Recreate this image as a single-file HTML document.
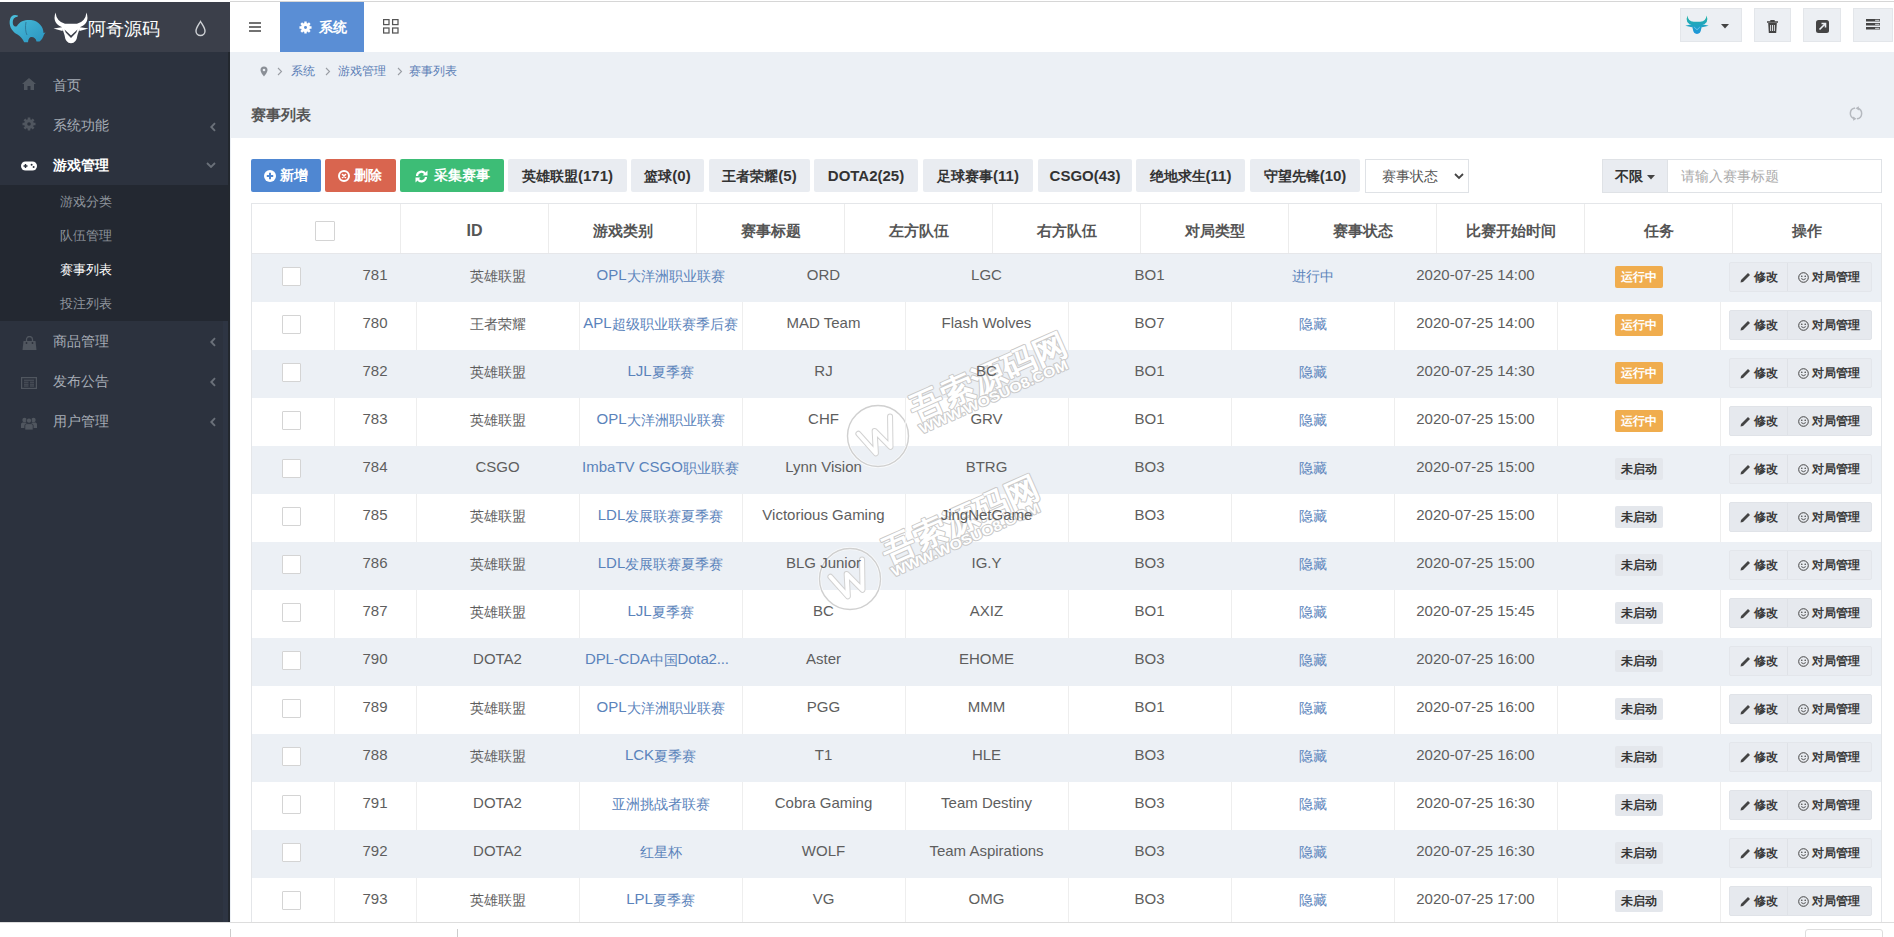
<!DOCTYPE html>
<html><head><meta charset="utf-8">
<style>
*{box-sizing:border-box;margin:0;padding:0}
html,body{width:1894px;height:937px;overflow:hidden;background:#fff;font-family:"Liberation Sans",sans-serif;font-size:14px;color:#555}
.l{font-size:15px}
.th .l{font-size:16px}
.td .l{position:relative;top:-1px}
.abs{position:absolute}
svg{position:absolute;display:block}
#topline{left:230px;top:1px;width:1664px;height:1px;background:#d6d6d6}
#sidebar{left:0;top:2px;width:230px;height:920px;background:#2c323e}
#logo{left:0;top:0;width:230px;height:50px;background:#3b3f4a}
#sub{left:0;top:183px;width:230px;height:136px;background:#232831}
.mi{position:absolute;left:53px;color:#a7adb6;font-size:14px;line-height:20px}
.chev{position:absolute;left:210px}
.si{position:absolute;left:60px;color:#8e949c;font-size:13px;line-height:20px}
#header{left:230px;top:2px;width:1664px;height:50px;background:#fff}
#content{left:230px;top:52px;width:1664px;height:870px;background:#ecf0f5}
#panel{left:231px;top:138px;width:1663px;height:784px;background:#fff}
.hbox{position:absolute;top:6px;height:34px;background:#eceff3;border:1px solid #e3e6ea}
.btn{position:absolute;top:159px;height:33px;line-height:33px;text-align:center;font-weight:bold;font-size:14px;color:#333;background:#e9ecf1;border-radius:2px}
.btn.c{color:#fff}
#tbl{left:251px;top:203px;width:1631px;height:719px;border:1px solid #e4e6e9;border-bottom:none;overflow:hidden}
.th{position:absolute;top:0;height:49px;line-height:54px;text-align:center;font-weight:bold;font-size:15px;color:#555}
.row{position:absolute;left:0;width:1629px;height:48px}
.rowbg{position:absolute;left:0;width:1629px;height:48px;background:#ecf0f5}
.td{position:absolute;top:0;height:48px;line-height:44px;text-align:center;font-size:14px;color:#5e5e5e;white-space:nowrap;overflow:hidden}
.row.even .td{box-shadow:inset 1px 0 #eeeeee}
.row.even .td.c0{box-shadow:none}
.lnk{color:#5a83bb}
.cb{position:absolute;width:19px;height:19px;border:1px solid #d4d4d4;background:#fff;border-radius:1px}
.badge{position:absolute;top:12px;width:48px;height:22px;line-height:22px;font-size:12px;font-weight:bold;text-align:center;border-radius:2px}
.b-run{background:#f0ad4e;color:#fff}
.b-stop{background:#e4e7ec;color:#333}
.ops{position:absolute;left:9px;top:8px;width:143px;height:30px;background:#e6e9ee;border:1px solid #e0e3e8;border-radius:2px;font-size:12px;font-weight:bold;color:#3a3a3a;line-height:29px}
.row.odd .ops{background:#e9ecf1;border-color:#e3e6eb}
.op1{position:absolute;left:0;top:0;width:58px;height:28px;border-right:1px solid #dfe2e7}
.op2{position:absolute;left:58px;top:0;width:84px;height:28px}
.ops svg{top:9px}
.ops .t1{position:absolute;left:24px;top:0}
.ops .t2{position:absolute;left:24px;top:0}
</style></head><body>
<div id="topline" class="abs"></div>
<div id="sidebar" class="abs">
  <div id="logo" class="abs">
    <svg style="left:0;top:0" width="100" height="50" viewBox="0 2 100 50">
      <defs><linearGradient id="eg" x1="0" y1="0" x2="1" y2="1"><stop offset="0" stop-color="#4cc0dc"/><stop offset="1" stop-color="#2a94c0"/></linearGradient></defs>
      <path d="M13 31 C9 27 8.5 19 12 16 C13.5 14.8 15.5 14.6 18 15.6 L17.3 17 C14.5 16.8 12.6 19 12.8 23 C13 26 15 27.5 17 26 C20 20.5 26 19.5 31 20 C39 21 43.5 27 43.5 33 L45.5 32.5 L44 34.5 C43 38 41.5 40 39.5 41.5 L36.5 41.5 C36 38.5 34 37 31.5 37 C29.5 37 28.3 39 28 42.3 L24.2 42.3 C22.5 38.5 20.5 36.5 17.5 34.5 C15.5 33.5 14 32.5 13 31 Z" fill="url(#eg)"/>
      <path d="M26 22 C25 27 25.5 32 27 35" fill="none" stroke="#2b6f8f" stroke-width="0.8"/>
      <path d="M55.5 12.5 Q51.5 24.5 64 27.6 L78 27.6 Q90.5 24.5 86.5 12.5 Q85.5 21.5 77 23.8 L65 23.8 Q56.5 21.5 55.5 12.5 Z" fill="#fff"/>
      <path d="M53.5 28.5 L63.5 27 L62.5 31 Z M88.5 28.5 L78.5 27 L79.5 31 Z" fill="#fff"/>
      <path d="M61.5 26 L80.5 26 L77.5 35 Q76.5 43.2 71 43.2 Q65.5 43.2 64.5 35 Z" fill="#fff"/>
      <path d="M64.5 29.5 L71 35.5 L77.5 29.5 L76.3 32.5 L71 38 L65.7 32.5 Z" fill="#3b3f4a"/>
    </svg>
    <div class="abs" style="left:88px;top:15px;font-family:'Liberation Serif',serif;font-size:18px;line-height:24px;color:#fff">阿奇源码</div>
    <svg style="left:194px;top:18px" width="13" height="17" viewBox="0 0 13 17">
      <path d="M6.5 1.5 C4.5 5 2 8 2 11 A4.5 4.5 0 0 0 11 11 C11 8 8.5 5 6.5 1.5 Z" fill="none" stroke="#cfd2d6" stroke-width="1.4"/>
    </svg>
  </div>
  <div id="sub" class="abs"></div>
  <div class="abs" style="left:223px;top:319px;width:5px;height:601px;background:#2e3543"></div>
  <div class="abs" style="left:228px;top:50px;width:2px;height:870px;background:#23282f"></div>
  <!-- icons -->
  <svg style="left:22px;top:76px" width="14" height="12" viewBox="0 0 14 12"><path d="M7 0 L14 6 L12 6 L12 12 L8.5 12 L8.5 8 L5.5 8 L5.5 12 L2 12 L2 6 L0 6 Z" fill="#50565f"/></svg>
  <svg style="left:22px;top:115px" width="14" height="14" viewBox="0 0 14 14"><circle cx="7" cy="7" r="4.8" fill="#50565f"/><g stroke="#50565f" stroke-width="2.6"><path d="M7 0.5V13.5M0.5 7H13.5M2.4 2.4L11.6 11.6M11.6 2.4L2.4 11.6"/></g><circle cx="7" cy="7" r="1.8" fill="#2b313c"/></svg>
  <svg style="left:21px;top:159px" width="16" height="10" viewBox="0 0 16 10"><rect x="0" y="0.5" width="16" height="9" rx="4.5" fill="#fff"/><path d="M2.5 5H6.5M4.5 3V7" stroke="#2b313c" stroke-width="1.4"/><circle cx="10.6" cy="3.8" r="1" fill="#2b313c"/><circle cx="12.6" cy="6" r="1" fill="#2b313c"/></svg>
  <svg style="left:22px;top:334px" width="15" height="14" viewBox="0 0 15 14"><path d="M1.5 5H13.5L14.5 14H0.5Z" fill="#50565f"/><path d="M4.5 6V3.5A3 3 0 0 1 10.5 3.5V6" fill="none" stroke="#50565f" stroke-width="1.3"/><circle cx="4.5" cy="7" r="0.9" fill="#2b313c"/><circle cx="10.5" cy="7" r="0.9" fill="#2b313c"/></svg>
  <svg style="left:21px;top:375px" width="16" height="12" viewBox="0 0 16 12"><rect x="0.6" y="0.6" width="14.8" height="10.8" fill="none" stroke="#50565f" stroke-width="1.2"/><path d="M3 3.2H13M3 5.2H7.5M3 7.2H7.5M3 9H7.5M9 5.2H13M9 7.2H13M9 9H13" stroke="#50565f" stroke-width="1"/></svg>
  <svg style="left:21px;top:415px" width="16" height="13" viewBox="0 0 16 13"><circle cx="3.5" cy="3" r="2.2" fill="#50565f"/><circle cx="12.5" cy="3" r="2.2" fill="#50565f"/><path d="M0 11V7.5C0 6 1 5.5 2.5 5.5H4.5C6 5.5 6 6.5 6 7.5V11Z M10 11V7.5C10 6.5 10 5.5 11.5 5.5H13.5C15 5.5 16 6 16 7.5V11Z" fill="#50565f"/><circle cx="8" cy="3.6" r="2.6" fill="#50565f" stroke="#2b313c" stroke-width="0.8"/><path d="M3.8 13V9C3.8 7.3 5 6.6 6.5 6.6H9.5C11 6.6 12.2 7.3 12.2 9V13Z" fill="#50565f" stroke="#2b313c" stroke-width="0.8"/></svg>
  <div class="mi" style="top:73px">首页</div>
  <div class="mi" style="top:113px">系统功能</div>
  <div class="mi" style="top:153px;color:#fff;font-weight:bold">游戏管理</div>
  <div class="si" style="top:190px">游戏分类</div>
  <div class="si" style="top:224px">队伍管理</div>
  <div class="si" style="top:258px;color:#fff">赛事列表</div>
  <div class="si" style="top:292px">投注列表</div>
  <div class="mi" style="top:329px">商品管理</div>
  <div class="mi" style="top:369px">发布公告</div>
  <div class="mi" style="top:409px">用户管理</div>
  <svg class="chev" style="top:120px" width="6" height="10" viewBox="0 0 6 10"><path d="M5 1.2L1.3 5L5 8.8" fill="none" stroke="#6a7079" stroke-width="1.9"/></svg>
  <svg class="chev" style="left:206px;top:160px" width="10" height="6" viewBox="0 0 10 6"><path d="M1 1L5 5L9 1" fill="none" stroke="#6a7079" stroke-width="1.8"/></svg>
  <svg class="chev" style="top:335px" width="6" height="10" viewBox="0 0 6 10"><path d="M5 1.2L1.3 5L5 8.8" fill="none" stroke="#6a7079" stroke-width="1.9"/></svg>
  <svg class="chev" style="top:375px" width="6" height="10" viewBox="0 0 6 10"><path d="M5 1.2L1.3 5L5 8.8" fill="none" stroke="#6a7079" stroke-width="1.9"/></svg>
  <svg class="chev" style="top:415px" width="6" height="10" viewBox="0 0 6 10"><path d="M5 1.2L1.3 5L5 8.8" fill="none" stroke="#6a7079" stroke-width="1.9"/></svg>
</div>
<div id="header" class="abs">
  <svg style="left:19px;top:20px" width="12" height="10" viewBox="0 0 12 10"><path d="M0 1H12M0 5H12M0 9H12" stroke="#444" stroke-width="1.6"/></svg>
  <div class="abs" style="left:50px;top:0;width:84px;height:50px;background:#5a8ed5"></div>
  <svg style="left:69px;top:18.5px" width="13" height="13" viewBox="0 0 14 14"><circle cx="7" cy="7" r="4.8" fill="#fff"/><g stroke="#fff" stroke-width="2.6"><path d="M7 0.5V13.5M0.5 7H13.5M2.4 2.4L11.6 11.6M11.6 2.4L2.4 11.6"/></g><circle cx="7" cy="7" r="1.6" fill="#5a8ed5"/></svg>
  <div class="abs" style="left:89px;top:15px;font-size:14px;line-height:20px;color:#fff;font-weight:bold">系统</div>
  <svg style="left:153px;top:17px" width="16" height="15" viewBox="0 0 16 15"><g fill="none" stroke="#555" stroke-width="1.25"><rect x="0.6" y="0.6" width="5.4" height="5" /><rect x="9.6" y="0.6" width="5.4" height="5"/><rect x="0.6" y="9" width="5.4" height="5"/><rect x="9.6" y="9" width="5.4" height="5"/></g></svg>
  <div class="hbox" style="left:1450px;width:62px"></div>
  <svg style="left:0;top:0" width="1664" height="50" viewBox="0 0 1664 50"><defs><linearGradient id="bg2" gradientUnits="userSpaceOnUse" x1="0" y1="14" x2="0" y2="43"><stop offset="0" stop-color="#22b3a6"/><stop offset="1" stop-color="#1d95dc"/></linearGradient></defs><g transform="translate(1424.4,6) scale(0.6)" fill="url(#bg2)"><path d="M55 12.5 Q50 26 64 28.5 L78 28.5 Q92 26 87 12.5 Q86 22 76.5 23 L65.5 23 Q56 22 55 12.5 Z"/><path d="M51.5 29.5 L63.5 26.5 L62.5 32 Z"/><path d="M90.5 29.5 L78.5 26.5 L79.5 32 Z"/><path d="M61 25 L81 25 L78 35 Q77 43.2 71 43.2 Q65 43.2 64 35 Z"/><path d="M65.5 30.5 L71 35.5 L76.5 30.5 L75.5 33 L71 37 L66.5 33 Z" fill="#6cc6ee"/></g></svg>
  <svg style="left:1491px;top:22px" width="8" height="5" viewBox="0 0 8 5"><path d="M0 0H8L4 4.5Z" fill="#444"/></svg>
  <div class="hbox" style="left:1524px;width:37px"></div>
  <svg style="left:1537px;top:18px" width="11" height="13" viewBox="0 0 11 13"><path d="M0 2H11M4 2V0.7H7V2" fill="none" stroke="#444" stroke-width="1.4"/><path d="M1.2 3H9.8L9.2 13H1.8Z" fill="#444"/><path d="M3.6 5V11M5.5 5V11M7.4 5V11" stroke="#eceff3" stroke-width="0.9"/></svg>
  <div class="hbox" style="left:1573px;width:38px"></div>
  <svg style="left:1586px;top:18px" width="13" height="13" viewBox="0 0 13 13"><rect x="0" y="0" width="13" height="13" rx="2.5" fill="#444"/><path d="M3.5 9.5L9 4M5.5 3.5H9.5V7.5" fill="none" stroke="#eceff3" stroke-width="1.6"/></svg>
  <div class="hbox" style="left:1623px;width:40px"></div>
  <svg style="left:1636px;top:16.5px" width="15" height="12" viewBox="0 0 15 12"><path d="M0 1.3H14M0 5.3H14M0 9.3H14" stroke="#444" stroke-width="2.6"/><path d="M9.5 1.3H13M9.5 5.3H13M9.5 9.3H13" stroke="#eceff3" stroke-width="0.9" stroke-linecap="round"/></svg>
</div>
<div id="content" class="abs">
  <svg style="left:30px;top:14px" width="8" height="11" viewBox="0 0 8 11"><path d="M4 0.5A3.5 3.5 0 0 0 0.5 4C0.5 6.5 4 10.5 4 10.5C4 10.5 7.5 6.5 7.5 4A3.5 3.5 0 0 0 4 0.5Z" fill="#8a8f96"/><circle cx="4" cy="4" r="1.3" fill="#ecf0f5"/></svg>
  <svg style="left:47px;top:15px" width="6" height="9" viewBox="0 0 6 9"><path d="M1 1L4.5 4.5L1 8" fill="none" stroke="#9a9ea4" stroke-width="1.1"/></svg>
  <div class="abs" style="left:61px;top:10px;font-size:12px;line-height:18px;color:#5b7eb5">系统</div>
  <svg style="left:95px;top:15px" width="6" height="9" viewBox="0 0 6 9"><path d="M1 1L4.5 4.5L1 8" fill="none" stroke="#9a9ea4" stroke-width="1.1"/></svg>
  <div class="abs" style="left:108px;top:10px;font-size:12px;line-height:18px;color:#5b7eb5">游戏管理</div>
  <svg style="left:167px;top:15px" width="6" height="9" viewBox="0 0 6 9"><path d="M1 1L4.5 4.5L1 8" fill="none" stroke="#9a9ea4" stroke-width="1.1"/></svg>
  <div class="abs" style="left:179px;top:10px;font-size:12px;line-height:18px;color:#5b7eb5">赛事列表</div>
  <div class="abs" style="left:21px;top:53px;font-size:15px;line-height:20px;font-weight:bold;color:#555">赛事列表</div>
  <svg style="left:1619px;top:54px" width="14" height="15" viewBox="0 0 14 15"><g fill="none" stroke="#b5b9bf" stroke-width="1.5"><path d="M6 2 A5.4 5.4 0 0 0 5.5 12.6"/><path d="M8 12.8 A5.4 5.4 0 0 0 8.5 2.2"/></g><path d="M4 10.5 L7.5 12.8 L4.2 14.8 Z" fill="#b5b9bf"/><path d="M10 4.5 L6.5 2.2 L9.8 0.2 Z" fill="#b5b9bf"/></svg>
</div>
<div id="panel" class="abs"></div>
<div class="btn c" style="left:251px;width:70px;background:#4f87d2"><svg style="left:13px;top:11px" width="12" height="12" viewBox="0 0 12 12"><circle cx="6" cy="6" r="6" fill="#fff"/><path d="M6 2.8V9.2M2.8 6H9.2" stroke="#4f87d2" stroke-width="2"/></svg><span style="position:absolute;left:29px">新增</span></div>
<div class="btn c" style="left:325px;width:71px;background:#d9654f"><svg style="left:13px;top:11px" width="12" height="12" viewBox="0 0 12 12"><circle cx="6" cy="6" r="5" fill="none" stroke="#fff" stroke-width="2"/><path d="M4.5 4.5L7.5 7.5M7.5 4.5L4.5 7.5" stroke="#fff" stroke-width="1.6" stroke-linecap="round"/></svg><span style="position:absolute;left:29px">删除</span></div>
<div class="btn c" style="left:400px;width:104px;background:#3dbd76"><svg style="left:15px;top:10.5px" width="13" height="13" viewBox="0 0 13 13"><path d="M2 6A4.5 4.5 0 0 1 10.3 3.8M11 7A4.5 4.5 0 0 1 2.7 9.2" fill="none" stroke="#fff" stroke-width="2.2"/><path d="M12.5 0.5V5.5H7.5Z M0.5 12.5V7.5H5.5Z" fill="#fff"/></svg><span style="position:absolute;left:34px">采集赛事</span></div>
<div class="btn" style="left:508px;width:119px">英雄联盟<span class="l">(171)</span></div>
<div class="btn" style="left:631px;width:73px">篮球<span class="l">(0)</span></div>
<div class="btn" style="left:709px;width:101px">王者荣耀<span class="l">(5)</span></div>
<div class="btn" style="left:814px;width:104px"><span class="l">DOTA2(25)</span></div>
<div class="btn" style="left:923px;width:110px">足球赛事<span class="l">(11)</span></div>
<div class="btn" style="left:1038px;width:94px"><span class="l">CSGO(43)</span></div>
<div class="btn" style="left:1136px;width:109px">绝地求生<span class="l">(11)</span></div>
<div class="btn" style="left:1250px;width:110px">守望先锋<span class="l">(10)</span></div>
<div class="abs" style="left:1365px;top:159px;width:104px;height:34px;border:1px solid #dfe2e6;background:#fff"><span style="position:absolute;left:16px;top:7px;font-size:14px;line-height:18px;color:#555">赛事状态</span><svg style="left:88px;top:13px" width="10" height="7" viewBox="0 0 10 7"><path d="M1 1L5 5L9 1" fill="none" stroke="#444" stroke-width="1.8"/></svg></div>
<div class="abs" style="left:1602px;top:159px;width:66px;height:34px;border:1px solid #dfe2e6;background:#e9ecf1"><span style="position:absolute;left:12px;top:7px;font-size:14px;line-height:18px;font-weight:bold;color:#333">不限</span><svg style="left:44px;top:15px" width="8" height="5" viewBox="0 0 8 5"><path d="M0 0H8L4 4.5Z" fill="#444"/></svg></div>
<div class="abs" style="left:1667px;top:159px;width:215px;height:34px;border:1px solid #dfe2e6;background:#fff"><span style="position:absolute;left:13px;top:7px;font-size:14px;line-height:18px;color:#aaa">请输入赛事标题</span></div>
<div id="tbl" class="abs">
<div class="th" style="left:-1.0px;width:149.0px;"><span class="cb" style="left:64px;top:17px;width:20px;height:20px"></span></div>
<div class="th" style="left:148.0px;width:148.0px;border-left:1px solid #ececec;"><span class="l">ID</span></div>
<div class="th" style="left:296.0px;width:148.0px;border-left:1px solid #ececec;">游戏类别</div>
<div class="th" style="left:444.0px;width:148.0px;border-left:1px solid #ececec;">赛事标题</div>
<div class="th" style="left:592.0px;width:148.0px;border-left:1px solid #ececec;">左方队伍</div>
<div class="th" style="left:740.0px;width:148.0px;border-left:1px solid #ececec;">右方队伍</div>
<div class="th" style="left:888.0px;width:148.0px;border-left:1px solid #ececec;">对局类型</div>
<div class="th" style="left:1036.0px;width:148.0px;border-left:1px solid #ececec;">赛事状态</div>
<div class="th" style="left:1184.0px;width:148.0px;border-left:1px solid #ececec;">比赛开始时间</div>
<div class="th" style="left:1332.0px;width:148.0px;border-left:1px solid #ececec;">任务</div>
<div class="th" style="left:1480.0px;width:149.0px;border-left:1px solid #ececec;">操作</div>
<div class="rowbg" style="top:50px"></div>
<div class="rowbg" style="top:146px"></div>
<div class="rowbg" style="top:242px"></div>
<div class="rowbg" style="top:338px"></div>
<div class="rowbg" style="top:434px"></div>
<div class="rowbg" style="top:530px"></div>
<div class="rowbg" style="top:626px"></div>
<div style="position:absolute;left:0;top:49px;width:1629px;height:1px;background:#e6e7ea"></div>
<svg style="left:-252px;top:-204px" width="1894" height="937" viewBox="0 0 1894 937">
<g transform="translate(878,436)">
<circle cx="0" cy="0" r="30.5" fill="none" stroke="#fff" stroke-width="3" opacity=".7"/>
<circle cx="0" cy="0" r="30.5" fill="none" stroke="#d0d0d0" stroke-width="1.4"/>
<g transform="rotate(-24)">
<path d="M-17 -10 L-9 15 L-1 -6 L7 15 L19 -13" fill="none" stroke="#d2d2d2" stroke-width="6" stroke-linejoin="round" stroke-linecap="round"/>
<path d="M-17 -10 L-9 15 L-1 -6 L7 15 L19 -13" fill="none" stroke="#fff" stroke-width="4" stroke-linejoin="round" stroke-linecap="round"/>
<text x="41" y="2" textLength="168" lengthAdjust="spacingAndGlyphs" font-size="32" font-weight="bold" fill="#fff" stroke="#cacaca" stroke-width="2" paint-order="stroke" stroke-linejoin="round" font-family="Liberation Sans,sans-serif">吾索源码网</text>
<text x="41" y="16" textLength="161" lengthAdjust="spacingAndGlyphs" font-size="14" font-weight="bold" fill="#fff" stroke="#cacaca" stroke-width="2" paint-order="stroke" stroke-linejoin="round" font-family="Liberation Sans,sans-serif">WWW.WOSUO8.COM</text>
</g></g>
<g transform="translate(850,579)">
<circle cx="0" cy="0" r="30.5" fill="none" stroke="#fff" stroke-width="3" opacity=".7"/>
<circle cx="0" cy="0" r="30.5" fill="none" stroke="#d0d0d0" stroke-width="1.4"/>
<g transform="rotate(-24)">
<path d="M-17 -10 L-9 15 L-1 -6 L7 15 L19 -13" fill="none" stroke="#d2d2d2" stroke-width="6" stroke-linejoin="round" stroke-linecap="round"/>
<path d="M-17 -10 L-9 15 L-1 -6 L7 15 L19 -13" fill="none" stroke="#fff" stroke-width="4" stroke-linejoin="round" stroke-linecap="round"/>
<text x="41" y="2" textLength="168" lengthAdjust="spacingAndGlyphs" font-size="32" font-weight="bold" fill="#fff" stroke="#cacaca" stroke-width="2" paint-order="stroke" stroke-linejoin="round" font-family="Liberation Sans,sans-serif">吾索源码网</text>
<text x="41" y="16" textLength="161" lengthAdjust="spacingAndGlyphs" font-size="14" font-weight="bold" fill="#fff" stroke="#cacaca" stroke-width="2" paint-order="stroke" stroke-linejoin="round" font-family="Liberation Sans,sans-serif">WWW.WOSUO8.COM</text>
</g></g>
</svg>

<div class="row odd" style="top:50px"><div class="td c0" style="left:-1.0px;width:83.0px;"><span class="cb" style="left:31.0px;top:13px"></span></div><div class="td c1" style="left:82.0px;width:82.0px;"><span class="l">781</span></div><div class="td c2" style="left:164.0px;width:163.0px;">英雄联盟</div><div class="td c3" style="left:327.0px;width:163.0px;"><span class="lnk"><span class="l">OPL</span>大洋洲职业联赛</span></div><div class="td c4" style="left:490.0px;width:163.0px;"><span class="l">ORD</span></div><div class="td c5" style="left:653.0px;width:163.0px;"><span class="l">LGC</span></div><div class="td c6" style="left:816.0px;width:163.0px;"><span class="l">BO1</span></div><div class="td c7" style="left:979.0px;width:163.0px;"><span class="lnk">进行中</span></div><div class="td c8" style="left:1142.0px;width:163.0px;"><span class="l">2020-07-25 14:00</span></div><div class="td c9" style="left:1305.0px;width:163.0px;"><span class="badge b-run" style="left:58.0px">运行中</span></div><div class="td c10" style="left:1468.0px;width:161.0px;"><span class="ops"><span class="op1"><svg style="left:10px" width="11" height="11" viewBox="0 0 11 11"><path d="M0.5 10.5L1 8L8 1L10 3L3 10Z" fill="#444"/></svg><span class="t1">修改</span></span><span class="op2"><svg style="left:10px" width="11" height="11" viewBox="0 0 11 11"><circle cx="5.5" cy="5.5" r="4.8" fill="none" stroke="#444" stroke-width="1"/><circle cx="3.8" cy="4.2" r="0.8" fill="#444"/><circle cx="7.2" cy="4.2" r="0.8" fill="#444"/><path d="M3.2 6.6Q5.5 8.8 7.8 6.6" fill="none" stroke="#444" stroke-width="0.9"/></svg><span class="t2">对局管理</span></span></span></div></div>
<div class="row even" style="top:98px"><div class="td c0" style="left:-1.0px;width:83.0px;"><span class="cb" style="left:31.0px;top:13px"></span></div><div class="td c1" style="left:82.0px;width:82.0px;"><span class="l">780</span></div><div class="td c2" style="left:164.0px;width:163.0px;">王者荣耀</div><div class="td c3" style="left:327.0px;width:163.0px;"><span class="lnk"><span class="l">APL</span>超级职业联赛季后赛</span></div><div class="td c4" style="left:490.0px;width:163.0px;"><span class="l">MAD Team</span></div><div class="td c5" style="left:653.0px;width:163.0px;"><span class="l">Flash Wolves</span></div><div class="td c6" style="left:816.0px;width:163.0px;"><span class="l">BO7</span></div><div class="td c7" style="left:979.0px;width:163.0px;"><span class="lnk">隐藏</span></div><div class="td c8" style="left:1142.0px;width:163.0px;"><span class="l">2020-07-25 14:00</span></div><div class="td c9" style="left:1305.0px;width:163.0px;"><span class="badge b-run" style="left:58.0px">运行中</span></div><div class="td c10" style="left:1468.0px;width:161.0px;"><span class="ops"><span class="op1"><svg style="left:10px" width="11" height="11" viewBox="0 0 11 11"><path d="M0.5 10.5L1 8L8 1L10 3L3 10Z" fill="#444"/></svg><span class="t1">修改</span></span><span class="op2"><svg style="left:10px" width="11" height="11" viewBox="0 0 11 11"><circle cx="5.5" cy="5.5" r="4.8" fill="none" stroke="#444" stroke-width="1"/><circle cx="3.8" cy="4.2" r="0.8" fill="#444"/><circle cx="7.2" cy="4.2" r="0.8" fill="#444"/><path d="M3.2 6.6Q5.5 8.8 7.8 6.6" fill="none" stroke="#444" stroke-width="0.9"/></svg><span class="t2">对局管理</span></span></span></div></div>
<div class="row odd" style="top:146px"><div class="td c0" style="left:-1.0px;width:83.0px;"><span class="cb" style="left:31.0px;top:13px"></span></div><div class="td c1" style="left:82.0px;width:82.0px;"><span class="l">782</span></div><div class="td c2" style="left:164.0px;width:163.0px;">英雄联盟</div><div class="td c3" style="left:327.0px;width:163.0px;"><span class="lnk"><span class="l">LJL</span>夏季赛</span></div><div class="td c4" style="left:490.0px;width:163.0px;"><span class="l">RJ</span></div><div class="td c5" style="left:653.0px;width:163.0px;"><span class="l">BC</span></div><div class="td c6" style="left:816.0px;width:163.0px;"><span class="l">BO1</span></div><div class="td c7" style="left:979.0px;width:163.0px;"><span class="lnk">隐藏</span></div><div class="td c8" style="left:1142.0px;width:163.0px;"><span class="l">2020-07-25 14:30</span></div><div class="td c9" style="left:1305.0px;width:163.0px;"><span class="badge b-run" style="left:58.0px">运行中</span></div><div class="td c10" style="left:1468.0px;width:161.0px;"><span class="ops"><span class="op1"><svg style="left:10px" width="11" height="11" viewBox="0 0 11 11"><path d="M0.5 10.5L1 8L8 1L10 3L3 10Z" fill="#444"/></svg><span class="t1">修改</span></span><span class="op2"><svg style="left:10px" width="11" height="11" viewBox="0 0 11 11"><circle cx="5.5" cy="5.5" r="4.8" fill="none" stroke="#444" stroke-width="1"/><circle cx="3.8" cy="4.2" r="0.8" fill="#444"/><circle cx="7.2" cy="4.2" r="0.8" fill="#444"/><path d="M3.2 6.6Q5.5 8.8 7.8 6.6" fill="none" stroke="#444" stroke-width="0.9"/></svg><span class="t2">对局管理</span></span></span></div></div>
<div class="row even" style="top:194px"><div class="td c0" style="left:-1.0px;width:83.0px;"><span class="cb" style="left:31.0px;top:13px"></span></div><div class="td c1" style="left:82.0px;width:82.0px;"><span class="l">783</span></div><div class="td c2" style="left:164.0px;width:163.0px;">英雄联盟</div><div class="td c3" style="left:327.0px;width:163.0px;"><span class="lnk"><span class="l">OPL</span>大洋洲职业联赛</span></div><div class="td c4" style="left:490.0px;width:163.0px;"><span class="l">CHF</span></div><div class="td c5" style="left:653.0px;width:163.0px;"><span class="l">GRV</span></div><div class="td c6" style="left:816.0px;width:163.0px;"><span class="l">BO1</span></div><div class="td c7" style="left:979.0px;width:163.0px;"><span class="lnk">隐藏</span></div><div class="td c8" style="left:1142.0px;width:163.0px;"><span class="l">2020-07-25 15:00</span></div><div class="td c9" style="left:1305.0px;width:163.0px;"><span class="badge b-run" style="left:58.0px">运行中</span></div><div class="td c10" style="left:1468.0px;width:161.0px;"><span class="ops"><span class="op1"><svg style="left:10px" width="11" height="11" viewBox="0 0 11 11"><path d="M0.5 10.5L1 8L8 1L10 3L3 10Z" fill="#444"/></svg><span class="t1">修改</span></span><span class="op2"><svg style="left:10px" width="11" height="11" viewBox="0 0 11 11"><circle cx="5.5" cy="5.5" r="4.8" fill="none" stroke="#444" stroke-width="1"/><circle cx="3.8" cy="4.2" r="0.8" fill="#444"/><circle cx="7.2" cy="4.2" r="0.8" fill="#444"/><path d="M3.2 6.6Q5.5 8.8 7.8 6.6" fill="none" stroke="#444" stroke-width="0.9"/></svg><span class="t2">对局管理</span></span></span></div></div>
<div class="row odd" style="top:242px"><div class="td c0" style="left:-1.0px;width:83.0px;"><span class="cb" style="left:31.0px;top:13px"></span></div><div class="td c1" style="left:82.0px;width:82.0px;"><span class="l">784</span></div><div class="td c2" style="left:164.0px;width:163.0px;"><span class="l">CSGO</span></div><div class="td c3" style="left:327.0px;width:163.0px;"><span class="lnk"><span class="l">ImbaTV CSGO</span>职业联赛</span></div><div class="td c4" style="left:490.0px;width:163.0px;"><span class="l">Lynn Vision</span></div><div class="td c5" style="left:653.0px;width:163.0px;"><span class="l">BTRG</span></div><div class="td c6" style="left:816.0px;width:163.0px;"><span class="l">BO3</span></div><div class="td c7" style="left:979.0px;width:163.0px;"><span class="lnk">隐藏</span></div><div class="td c8" style="left:1142.0px;width:163.0px;"><span class="l">2020-07-25 15:00</span></div><div class="td c9" style="left:1305.0px;width:163.0px;"><span class="badge b-stop" style="left:58.0px">未启动</span></div><div class="td c10" style="left:1468.0px;width:161.0px;"><span class="ops"><span class="op1"><svg style="left:10px" width="11" height="11" viewBox="0 0 11 11"><path d="M0.5 10.5L1 8L8 1L10 3L3 10Z" fill="#444"/></svg><span class="t1">修改</span></span><span class="op2"><svg style="left:10px" width="11" height="11" viewBox="0 0 11 11"><circle cx="5.5" cy="5.5" r="4.8" fill="none" stroke="#444" stroke-width="1"/><circle cx="3.8" cy="4.2" r="0.8" fill="#444"/><circle cx="7.2" cy="4.2" r="0.8" fill="#444"/><path d="M3.2 6.6Q5.5 8.8 7.8 6.6" fill="none" stroke="#444" stroke-width="0.9"/></svg><span class="t2">对局管理</span></span></span></div></div>
<div class="row even" style="top:290px"><div class="td c0" style="left:-1.0px;width:83.0px;"><span class="cb" style="left:31.0px;top:13px"></span></div><div class="td c1" style="left:82.0px;width:82.0px;"><span class="l">785</span></div><div class="td c2" style="left:164.0px;width:163.0px;">英雄联盟</div><div class="td c3" style="left:327.0px;width:163.0px;"><span class="lnk"><span class="l">LDL</span>发展联赛夏季赛</span></div><div class="td c4" style="left:490.0px;width:163.0px;"><span class="l">Victorious Gaming</span></div><div class="td c5" style="left:653.0px;width:163.0px;"><span class="l">JingNetGame</span></div><div class="td c6" style="left:816.0px;width:163.0px;"><span class="l">BO3</span></div><div class="td c7" style="left:979.0px;width:163.0px;"><span class="lnk">隐藏</span></div><div class="td c8" style="left:1142.0px;width:163.0px;"><span class="l">2020-07-25 15:00</span></div><div class="td c9" style="left:1305.0px;width:163.0px;"><span class="badge b-stop" style="left:58.0px">未启动</span></div><div class="td c10" style="left:1468.0px;width:161.0px;"><span class="ops"><span class="op1"><svg style="left:10px" width="11" height="11" viewBox="0 0 11 11"><path d="M0.5 10.5L1 8L8 1L10 3L3 10Z" fill="#444"/></svg><span class="t1">修改</span></span><span class="op2"><svg style="left:10px" width="11" height="11" viewBox="0 0 11 11"><circle cx="5.5" cy="5.5" r="4.8" fill="none" stroke="#444" stroke-width="1"/><circle cx="3.8" cy="4.2" r="0.8" fill="#444"/><circle cx="7.2" cy="4.2" r="0.8" fill="#444"/><path d="M3.2 6.6Q5.5 8.8 7.8 6.6" fill="none" stroke="#444" stroke-width="0.9"/></svg><span class="t2">对局管理</span></span></span></div></div>
<div class="row odd" style="top:338px"><div class="td c0" style="left:-1.0px;width:83.0px;"><span class="cb" style="left:31.0px;top:13px"></span></div><div class="td c1" style="left:82.0px;width:82.0px;"><span class="l">786</span></div><div class="td c2" style="left:164.0px;width:163.0px;">英雄联盟</div><div class="td c3" style="left:327.0px;width:163.0px;"><span class="lnk"><span class="l">LDL</span>发展联赛夏季赛</span></div><div class="td c4" style="left:490.0px;width:163.0px;"><span class="l">BLG Junior</span></div><div class="td c5" style="left:653.0px;width:163.0px;"><span class="l">IG.Y</span></div><div class="td c6" style="left:816.0px;width:163.0px;"><span class="l">BO3</span></div><div class="td c7" style="left:979.0px;width:163.0px;"><span class="lnk">隐藏</span></div><div class="td c8" style="left:1142.0px;width:163.0px;"><span class="l">2020-07-25 15:00</span></div><div class="td c9" style="left:1305.0px;width:163.0px;"><span class="badge b-stop" style="left:58.0px">未启动</span></div><div class="td c10" style="left:1468.0px;width:161.0px;"><span class="ops"><span class="op1"><svg style="left:10px" width="11" height="11" viewBox="0 0 11 11"><path d="M0.5 10.5L1 8L8 1L10 3L3 10Z" fill="#444"/></svg><span class="t1">修改</span></span><span class="op2"><svg style="left:10px" width="11" height="11" viewBox="0 0 11 11"><circle cx="5.5" cy="5.5" r="4.8" fill="none" stroke="#444" stroke-width="1"/><circle cx="3.8" cy="4.2" r="0.8" fill="#444"/><circle cx="7.2" cy="4.2" r="0.8" fill="#444"/><path d="M3.2 6.6Q5.5 8.8 7.8 6.6" fill="none" stroke="#444" stroke-width="0.9"/></svg><span class="t2">对局管理</span></span></span></div></div>
<div class="row even" style="top:386px"><div class="td c0" style="left:-1.0px;width:83.0px;"><span class="cb" style="left:31.0px;top:13px"></span></div><div class="td c1" style="left:82.0px;width:82.0px;"><span class="l">787</span></div><div class="td c2" style="left:164.0px;width:163.0px;">英雄联盟</div><div class="td c3" style="left:327.0px;width:163.0px;"><span class="lnk"><span class="l">LJL</span>夏季赛</span></div><div class="td c4" style="left:490.0px;width:163.0px;"><span class="l">BC</span></div><div class="td c5" style="left:653.0px;width:163.0px;"><span class="l">AXIZ</span></div><div class="td c6" style="left:816.0px;width:163.0px;"><span class="l">BO1</span></div><div class="td c7" style="left:979.0px;width:163.0px;"><span class="lnk">隐藏</span></div><div class="td c8" style="left:1142.0px;width:163.0px;"><span class="l">2020-07-25 15:45</span></div><div class="td c9" style="left:1305.0px;width:163.0px;"><span class="badge b-stop" style="left:58.0px">未启动</span></div><div class="td c10" style="left:1468.0px;width:161.0px;"><span class="ops"><span class="op1"><svg style="left:10px" width="11" height="11" viewBox="0 0 11 11"><path d="M0.5 10.5L1 8L8 1L10 3L3 10Z" fill="#444"/></svg><span class="t1">修改</span></span><span class="op2"><svg style="left:10px" width="11" height="11" viewBox="0 0 11 11"><circle cx="5.5" cy="5.5" r="4.8" fill="none" stroke="#444" stroke-width="1"/><circle cx="3.8" cy="4.2" r="0.8" fill="#444"/><circle cx="7.2" cy="4.2" r="0.8" fill="#444"/><path d="M3.2 6.6Q5.5 8.8 7.8 6.6" fill="none" stroke="#444" stroke-width="0.9"/></svg><span class="t2">对局管理</span></span></span></div></div>
<div class="row odd" style="top:434px"><div class="td c0" style="left:-1.0px;width:83.0px;"><span class="cb" style="left:31.0px;top:13px"></span></div><div class="td c1" style="left:82.0px;width:82.0px;"><span class="l">790</span></div><div class="td c2" style="left:164.0px;width:163.0px;"><span class="l">DOTA2</span></div><div class="td c3" style="left:327.0px;width:163.0px;text-align:left;padding-left:6px;"><span class="lnk" style="letter-spacing:-0.15px"><span class="l">DPL-CDA</span>中国<span class="l">Dota2...</span></span></div><div class="td c4" style="left:490.0px;width:163.0px;"><span class="l">Aster</span></div><div class="td c5" style="left:653.0px;width:163.0px;"><span class="l">EHOME</span></div><div class="td c6" style="left:816.0px;width:163.0px;"><span class="l">BO3</span></div><div class="td c7" style="left:979.0px;width:163.0px;"><span class="lnk">隐藏</span></div><div class="td c8" style="left:1142.0px;width:163.0px;"><span class="l">2020-07-25 16:00</span></div><div class="td c9" style="left:1305.0px;width:163.0px;"><span class="badge b-stop" style="left:58.0px">未启动</span></div><div class="td c10" style="left:1468.0px;width:161.0px;"><span class="ops"><span class="op1"><svg style="left:10px" width="11" height="11" viewBox="0 0 11 11"><path d="M0.5 10.5L1 8L8 1L10 3L3 10Z" fill="#444"/></svg><span class="t1">修改</span></span><span class="op2"><svg style="left:10px" width="11" height="11" viewBox="0 0 11 11"><circle cx="5.5" cy="5.5" r="4.8" fill="none" stroke="#444" stroke-width="1"/><circle cx="3.8" cy="4.2" r="0.8" fill="#444"/><circle cx="7.2" cy="4.2" r="0.8" fill="#444"/><path d="M3.2 6.6Q5.5 8.8 7.8 6.6" fill="none" stroke="#444" stroke-width="0.9"/></svg><span class="t2">对局管理</span></span></span></div></div>
<div class="row even" style="top:482px"><div class="td c0" style="left:-1.0px;width:83.0px;"><span class="cb" style="left:31.0px;top:13px"></span></div><div class="td c1" style="left:82.0px;width:82.0px;"><span class="l">789</span></div><div class="td c2" style="left:164.0px;width:163.0px;">英雄联盟</div><div class="td c3" style="left:327.0px;width:163.0px;"><span class="lnk"><span class="l">OPL</span>大洋洲职业联赛</span></div><div class="td c4" style="left:490.0px;width:163.0px;"><span class="l">PGG</span></div><div class="td c5" style="left:653.0px;width:163.0px;"><span class="l">MMM</span></div><div class="td c6" style="left:816.0px;width:163.0px;"><span class="l">BO1</span></div><div class="td c7" style="left:979.0px;width:163.0px;"><span class="lnk">隐藏</span></div><div class="td c8" style="left:1142.0px;width:163.0px;"><span class="l">2020-07-25 16:00</span></div><div class="td c9" style="left:1305.0px;width:163.0px;"><span class="badge b-stop" style="left:58.0px">未启动</span></div><div class="td c10" style="left:1468.0px;width:161.0px;"><span class="ops"><span class="op1"><svg style="left:10px" width="11" height="11" viewBox="0 0 11 11"><path d="M0.5 10.5L1 8L8 1L10 3L3 10Z" fill="#444"/></svg><span class="t1">修改</span></span><span class="op2"><svg style="left:10px" width="11" height="11" viewBox="0 0 11 11"><circle cx="5.5" cy="5.5" r="4.8" fill="none" stroke="#444" stroke-width="1"/><circle cx="3.8" cy="4.2" r="0.8" fill="#444"/><circle cx="7.2" cy="4.2" r="0.8" fill="#444"/><path d="M3.2 6.6Q5.5 8.8 7.8 6.6" fill="none" stroke="#444" stroke-width="0.9"/></svg><span class="t2">对局管理</span></span></span></div></div>
<div class="row odd" style="top:530px"><div class="td c0" style="left:-1.0px;width:83.0px;"><span class="cb" style="left:31.0px;top:13px"></span></div><div class="td c1" style="left:82.0px;width:82.0px;"><span class="l">788</span></div><div class="td c2" style="left:164.0px;width:163.0px;">英雄联盟</div><div class="td c3" style="left:327.0px;width:163.0px;"><span class="lnk"><span class="l">LCK</span>夏季赛</span></div><div class="td c4" style="left:490.0px;width:163.0px;"><span class="l">T1</span></div><div class="td c5" style="left:653.0px;width:163.0px;"><span class="l">HLE</span></div><div class="td c6" style="left:816.0px;width:163.0px;"><span class="l">BO3</span></div><div class="td c7" style="left:979.0px;width:163.0px;"><span class="lnk">隐藏</span></div><div class="td c8" style="left:1142.0px;width:163.0px;"><span class="l">2020-07-25 16:00</span></div><div class="td c9" style="left:1305.0px;width:163.0px;"><span class="badge b-stop" style="left:58.0px">未启动</span></div><div class="td c10" style="left:1468.0px;width:161.0px;"><span class="ops"><span class="op1"><svg style="left:10px" width="11" height="11" viewBox="0 0 11 11"><path d="M0.5 10.5L1 8L8 1L10 3L3 10Z" fill="#444"/></svg><span class="t1">修改</span></span><span class="op2"><svg style="left:10px" width="11" height="11" viewBox="0 0 11 11"><circle cx="5.5" cy="5.5" r="4.8" fill="none" stroke="#444" stroke-width="1"/><circle cx="3.8" cy="4.2" r="0.8" fill="#444"/><circle cx="7.2" cy="4.2" r="0.8" fill="#444"/><path d="M3.2 6.6Q5.5 8.8 7.8 6.6" fill="none" stroke="#444" stroke-width="0.9"/></svg><span class="t2">对局管理</span></span></span></div></div>
<div class="row even" style="top:578px"><div class="td c0" style="left:-1.0px;width:83.0px;"><span class="cb" style="left:31.0px;top:13px"></span></div><div class="td c1" style="left:82.0px;width:82.0px;"><span class="l">791</span></div><div class="td c2" style="left:164.0px;width:163.0px;"><span class="l">DOTA2</span></div><div class="td c3" style="left:327.0px;width:163.0px;"><span class="lnk">亚洲挑战者联赛</span></div><div class="td c4" style="left:490.0px;width:163.0px;"><span class="l">Cobra Gaming</span></div><div class="td c5" style="left:653.0px;width:163.0px;"><span class="l">Team Destiny</span></div><div class="td c6" style="left:816.0px;width:163.0px;"><span class="l">BO3</span></div><div class="td c7" style="left:979.0px;width:163.0px;"><span class="lnk">隐藏</span></div><div class="td c8" style="left:1142.0px;width:163.0px;"><span class="l">2020-07-25 16:30</span></div><div class="td c9" style="left:1305.0px;width:163.0px;"><span class="badge b-stop" style="left:58.0px">未启动</span></div><div class="td c10" style="left:1468.0px;width:161.0px;"><span class="ops"><span class="op1"><svg style="left:10px" width="11" height="11" viewBox="0 0 11 11"><path d="M0.5 10.5L1 8L8 1L10 3L3 10Z" fill="#444"/></svg><span class="t1">修改</span></span><span class="op2"><svg style="left:10px" width="11" height="11" viewBox="0 0 11 11"><circle cx="5.5" cy="5.5" r="4.8" fill="none" stroke="#444" stroke-width="1"/><circle cx="3.8" cy="4.2" r="0.8" fill="#444"/><circle cx="7.2" cy="4.2" r="0.8" fill="#444"/><path d="M3.2 6.6Q5.5 8.8 7.8 6.6" fill="none" stroke="#444" stroke-width="0.9"/></svg><span class="t2">对局管理</span></span></span></div></div>
<div class="row odd" style="top:626px"><div class="td c0" style="left:-1.0px;width:83.0px;"><span class="cb" style="left:31.0px;top:13px"></span></div><div class="td c1" style="left:82.0px;width:82.0px;"><span class="l">792</span></div><div class="td c2" style="left:164.0px;width:163.0px;"><span class="l">DOTA2</span></div><div class="td c3" style="left:327.0px;width:163.0px;"><span class="lnk">红星杯</span></div><div class="td c4" style="left:490.0px;width:163.0px;"><span class="l">WOLF</span></div><div class="td c5" style="left:653.0px;width:163.0px;"><span class="l">Team Aspirations</span></div><div class="td c6" style="left:816.0px;width:163.0px;"><span class="l">BO3</span></div><div class="td c7" style="left:979.0px;width:163.0px;"><span class="lnk">隐藏</span></div><div class="td c8" style="left:1142.0px;width:163.0px;"><span class="l">2020-07-25 16:30</span></div><div class="td c9" style="left:1305.0px;width:163.0px;"><span class="badge b-stop" style="left:58.0px">未启动</span></div><div class="td c10" style="left:1468.0px;width:161.0px;"><span class="ops"><span class="op1"><svg style="left:10px" width="11" height="11" viewBox="0 0 11 11"><path d="M0.5 10.5L1 8L8 1L10 3L3 10Z" fill="#444"/></svg><span class="t1">修改</span></span><span class="op2"><svg style="left:10px" width="11" height="11" viewBox="0 0 11 11"><circle cx="5.5" cy="5.5" r="4.8" fill="none" stroke="#444" stroke-width="1"/><circle cx="3.8" cy="4.2" r="0.8" fill="#444"/><circle cx="7.2" cy="4.2" r="0.8" fill="#444"/><path d="M3.2 6.6Q5.5 8.8 7.8 6.6" fill="none" stroke="#444" stroke-width="0.9"/></svg><span class="t2">对局管理</span></span></span></div></div>
<div class="row even" style="top:674px"><div class="td c0" style="left:-1.0px;width:83.0px;"><span class="cb" style="left:31.0px;top:13px"></span></div><div class="td c1" style="left:82.0px;width:82.0px;"><span class="l">793</span></div><div class="td c2" style="left:164.0px;width:163.0px;">英雄联盟</div><div class="td c3" style="left:327.0px;width:163.0px;"><span class="lnk"><span class="l">LPL</span>夏季赛</span></div><div class="td c4" style="left:490.0px;width:163.0px;"><span class="l">VG</span></div><div class="td c5" style="left:653.0px;width:163.0px;"><span class="l">OMG</span></div><div class="td c6" style="left:816.0px;width:163.0px;"><span class="l">BO3</span></div><div class="td c7" style="left:979.0px;width:163.0px;"><span class="lnk">隐藏</span></div><div class="td c8" style="left:1142.0px;width:163.0px;"><span class="l">2020-07-25 17:00</span></div><div class="td c9" style="left:1305.0px;width:163.0px;"><span class="badge b-stop" style="left:58.0px">未启动</span></div><div class="td c10" style="left:1468.0px;width:161.0px;"><span class="ops"><span class="op1"><svg style="left:10px" width="11" height="11" viewBox="0 0 11 11"><path d="M0.5 10.5L1 8L8 1L10 3L3 10Z" fill="#444"/></svg><span class="t1">修改</span></span><span class="op2"><svg style="left:10px" width="11" height="11" viewBox="0 0 11 11"><circle cx="5.5" cy="5.5" r="4.8" fill="none" stroke="#444" stroke-width="1"/><circle cx="3.8" cy="4.2" r="0.8" fill="#444"/><circle cx="7.2" cy="4.2" r="0.8" fill="#444"/><path d="M3.2 6.6Q5.5 8.8 7.8 6.6" fill="none" stroke="#444" stroke-width="0.9"/></svg><span class="t2">对局管理</span></span></span></div></div>
</div>
<div class="abs" style="left:0;top:922px;width:1894px;height:1px;background:#ddd"></div>
<div class="abs" style="left:230px;top:929px;width:1px;height:8px;background:#ccc"></div>
<div class="abs" style="left:457px;top:929px;width:1px;height:8px;background:#ccc"></div>
<div class="abs" style="left:1805px;top:929px;width:78px;height:20px;border:1px solid #ddd;border-radius:3px"></div>
</body></html>
